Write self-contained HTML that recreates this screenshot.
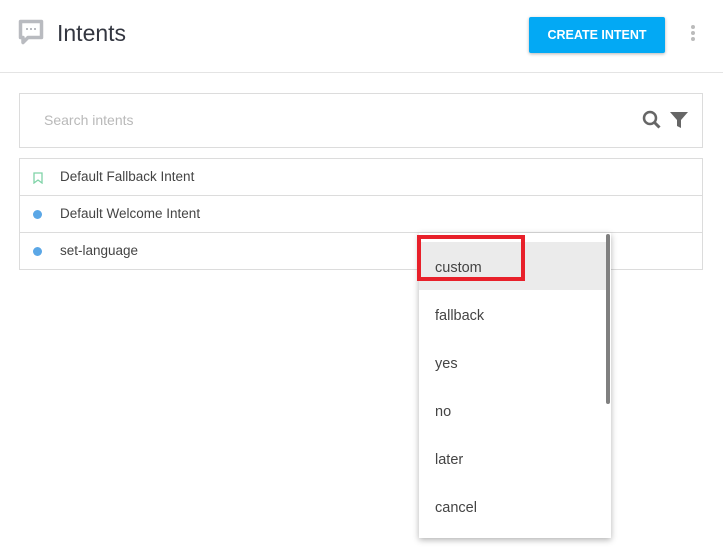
<!DOCTYPE html>
<html><head><style>
body{margin:0;width:723px;height:555px;background:#fff;font-family:"Liberation Sans",Arial,sans-serif;position:relative;overflow:hidden}
.a{position:absolute}
.hdr{left:0;top:72px;width:723px;height:1px;background:#e4e4e4}
.title{left:57px;top:20px;font-size:23px;color:#333640}
.btn{left:529px;top:17px;width:136px;height:36px;background:#03a9f4;color:#fff;font-size:12.5px;font-weight:bold;text-align:center;line-height:36px;border-radius:2px;box-shadow:0 1px 3px rgba(0,0,0,.3)}
.search{left:19px;top:93px;width:682px;height:53px;border:1px solid #dcdcdc}
.ph{left:44px;top:112px;font-size:14px;color:#b9b9b9}
.list{left:19px;top:158px;width:682px;height:110px;border:1px solid #dcdcdc}
.row{position:absolute;left:0;width:682px;height:36px;border-bottom:1px solid #dcdcdc;font-size:13.5px;color:#444;line-height:35px}
.row span{position:absolute;left:40px}
.dot{position:absolute;left:13px;top:14px;width:9px;height:9px;border-radius:50%;background:#5ba7e6}
.menu{left:419px;top:233px;width:192px;height:305px;background:#fff;box-shadow:0 2px 6px rgba(0,0,0,.3)}
.it{position:absolute;left:0;width:188px;height:48px;line-height:52px;font-size:14.5px;color:#444;padding-left:16px;box-sizing:border-box}
</style></head><body>
<svg class="a" style="left:18px;top:19px" width="27" height="27" viewBox="0 0 27 27"><path d="M2.5 2.5h21v16H10l-5 5v-5H2.5z" fill="none" stroke="#b9bbc0" stroke-width="3.5" stroke-linejoin="round"/><rect x="8" y="9" width="2" height="2" fill="#b9bbc0"/><rect x="12" y="9" width="2" height="2" fill="#b9bbc0"/><rect x="16" y="9" width="2" height="2" fill="#b9bbc0"/></svg>
<div class="a title">Intents</div>
<div class="a btn">CREATE INTENT</div>
<svg class="a" style="left:690px;top:24px" width="6" height="18"><circle cx="3" cy="3" r="2" fill="#bbb"/><circle cx="3" cy="9" r="2" fill="#bbb"/><circle cx="3" cy="15" r="2" fill="#bbb"/></svg>
<div class="a hdr"></div>
<div class="a search"></div>
<div class="a ph">Search intents</div>
<svg class="a" style="left:642px;top:110px" width="20" height="20" viewBox="0 0 20 20"><circle cx="8" cy="8" r="6" fill="none" stroke="#666" stroke-width="2.5"/><path d="M12.5 12.5l5 5" stroke="#666" stroke-width="3"/></svg>
<svg class="a" style="left:669px;top:110px" width="20" height="20" viewBox="0 0 20 20"><path d="M1 2h18l-7 8v8l-4-2v-6z" fill="#666"/></svg>
<div class="a list">
<div class="row" style="top:0"><svg class="a" style="left:13px;top:13px" width="10" height="12"><path d="M1 1h8v10l-4-3-4 3z" fill="none" stroke="#7fd3a7" stroke-width="1.3"/></svg><span>Default Fallback Intent</span></div>
<div class="row" style="top:37px"><div class="dot"></div><span>Default Welcome Intent</span></div>
<div class="row" style="top:74px;border-bottom:none"><div class="dot"></div><span>set-language</span></div>
</div>
<div class="a menu">
<div class="it" style="top:9px;background:#ebebeb">custom</div>
<div class="it" style="top:57px">fallback</div>
<div class="it" style="top:105px">yes</div>
<div class="it" style="top:153px">no</div>
<div class="it" style="top:201px">later</div>
<div class="it" style="top:249px">cancel</div>
<div class="a" style="left:187px;top:1px;width:4px;height:170px;background:#808080;border-radius:2px"></div>
</div>
<div class="a" style="left:417px;top:235px;width:100px;height:38px;border:4px solid #e8202a"></div>
</body></html>
